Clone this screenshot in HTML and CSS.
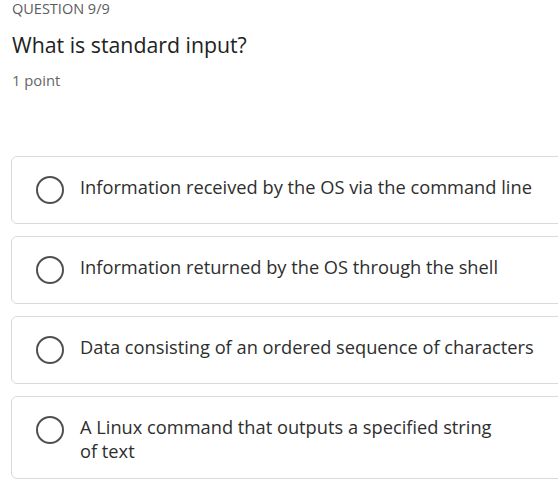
FILE: index.html
```html
<!DOCTYPE html>
<html lang="en">
<head>
    <meta charset="UTF-8">
    <meta name="viewport" content="width=device-width, initial-scale=1.0">
    <title>Question 9/9</title>
    <link rel="stylesheet" href="styles.css">
</head>
<body>
    <div class="quiz">
        <div class="counter">QUESTION 9/9</div>
        <h1 class="question">What is standard input?</h1>
        <div class="points">1 point</div>

        <div class="options">
            <label class="option">
                <span class="radio"></span>
                <span class="option-text">Information received by the OS via the command line</span>
            </label>
            <label class="option">
                <span class="radio"></span>
                <span class="option-text">Information returned by the OS through the shell</span>
            </label>
            <label class="option">
                <span class="radio"></span>
                <span class="option-text">Data consisting of an ordered sequence of characters</span>
            </label>
            <label class="option">
                <span class="radio"></span>
                <span class="option-text">A Linux command that outputs a specified string<br>of text</span>
            </label>
        </div>
    </div>
</body>
</html>
```

FILE: styles.css
```css
body {
    margin: 0;
    background: #fff;
    font-family: "Open Sans", "Noto Sans", sans-serif;
    color: #333;
    overflow: hidden;
}
.quiz {
    padding-left: 11px;
}
.counter {
    font-size: 14.5px;
    line-height: 15px;
    color: #5c5c5c;
    padding: 1px 0 0 1px;
}
.question {
    font-size: 21.3px;
    font-weight: normal;
    color: #222;
    line-height: 28px;
    margin: 15px 0 0 1px;
}
.points {
    font-size: 14.8px;
    color: #666;
    line-height: 18px;
    margin: 12px 0 0 1px;
}
.options {
    display: flex;
    flex-direction: column;
    gap: 12px;
    margin-top: 67px;
    margin-right: -12px;
}
.option {
    display: flex;
    align-items: flex-start;
    gap: 16px;
    min-height: 68px;
    box-sizing: border-box;
    padding: 18px 24px 15px;
    border: 1px solid #d9d9d9;
    border-radius: 6px;
    cursor: pointer;
}
.radio {
    flex: none;
    width: 24px;
    height: 24px;
    margin-top: 1px;
    border: 2px solid #505050;
    border-radius: 50%;
}
.option-text {
    font-size: 18.25px;
    line-height: 24px;
    color: #2e2e2e;
}
```
